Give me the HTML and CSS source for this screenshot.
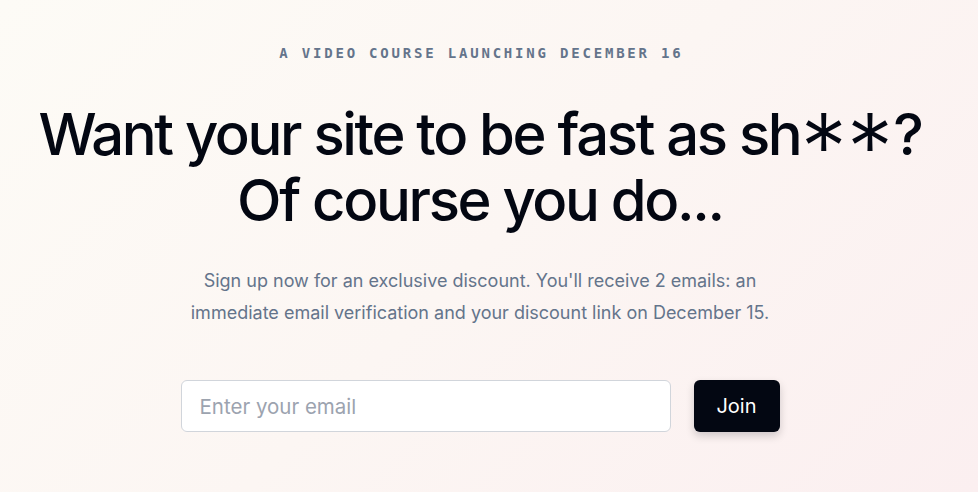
FILE: index.html
```html
<!DOCTYPE html>
<html lang="en">
<head>
<meta charset="utf-8">
<title>Fast as sh**</title>
<link rel="stylesheet" href="styles.css">
</head>
<body>
<main class="hero">
  <p class="eyebrow">A video course launching December 16</p>
  <h1 class="title">Want your site to be fast as sh<span class="stars">**</span>?<br>Of course you do...</h1>
  <p class="lead">Sign up now for an exclusive discount. You'll receive 2 emails: an immediate email verification and your discount link on December 15.</p>
  <form class="signup">
    <input class="email" type="email" placeholder="Enter your email">
    <button class="join" type="button">Join</button>
  </form>
</main>
</body>
</html>
```
FILE: styles.css
```css
html, body {
  margin: 0;
  height: 100%;
}
body {
  background: linear-gradient(135deg, #fdfbf6 0%, #fcf6f3 50%, #fbeff0 100%);
  font-family: Inter, "Noto Sans", sans-serif;
  color: #030712;
  overflow: hidden;
}
.hero {
  box-sizing: border-box;
  width: 960px;
  display: flex;
  flex-direction: column;
  align-items: center;
  padding-top: 44px;
}
.eyebrow {
  margin: 0;
  font-family: "DejaVu Sans Mono", "Liberation Mono", monospace;
  font-weight: 700;
  font-size: 14px;
  line-height: 18px;
  letter-spacing: 0.2em;
  text-transform: uppercase;
  color: #64748b;
  padding-left: 0.2em;
}
.title {
  margin: 39px 0 0;
  font-size: 58px;
  line-height: 66px;
  font-weight: 500;
  letter-spacing: -0.04em;
  text-align: center;
}
.stars {
  display: inline-block;
  font-size: 1.6em;
  line-height: 0;
  font-weight: 300;
  letter-spacing: 0;
  vertical-align: -0.28em;
}
.lead {
  margin: 32px 0 0;
  max-width: 600px;
  font-size: 18px;
  line-height: 32px;
  color: #64748b;
  text-align: center;
}
.signup {
  margin-top: 51px;
  display: flex;
  gap: 23px;
}
.email {
  box-sizing: border-box;
  width: 490px;
  height: 52px;
  border: 1px solid #d1d5db;
  border-radius: 6px;
  background: #fff;
  padding: 0 18px;
  font-family: inherit;
  font-size: 20.5px;
  color: #030712;
}
.email::placeholder {
  color: #9ca3af;
}
.join {
  box-sizing: border-box;
  width: 86px;
  height: 52px;
  border: 0;
  border-radius: 6px;
  background: #030712;
  color: #fff;
  font-family: inherit;
  font-size: 20px;
  box-shadow: 0 4px 8px rgba(3, 7, 18, 0.18);
}
```
